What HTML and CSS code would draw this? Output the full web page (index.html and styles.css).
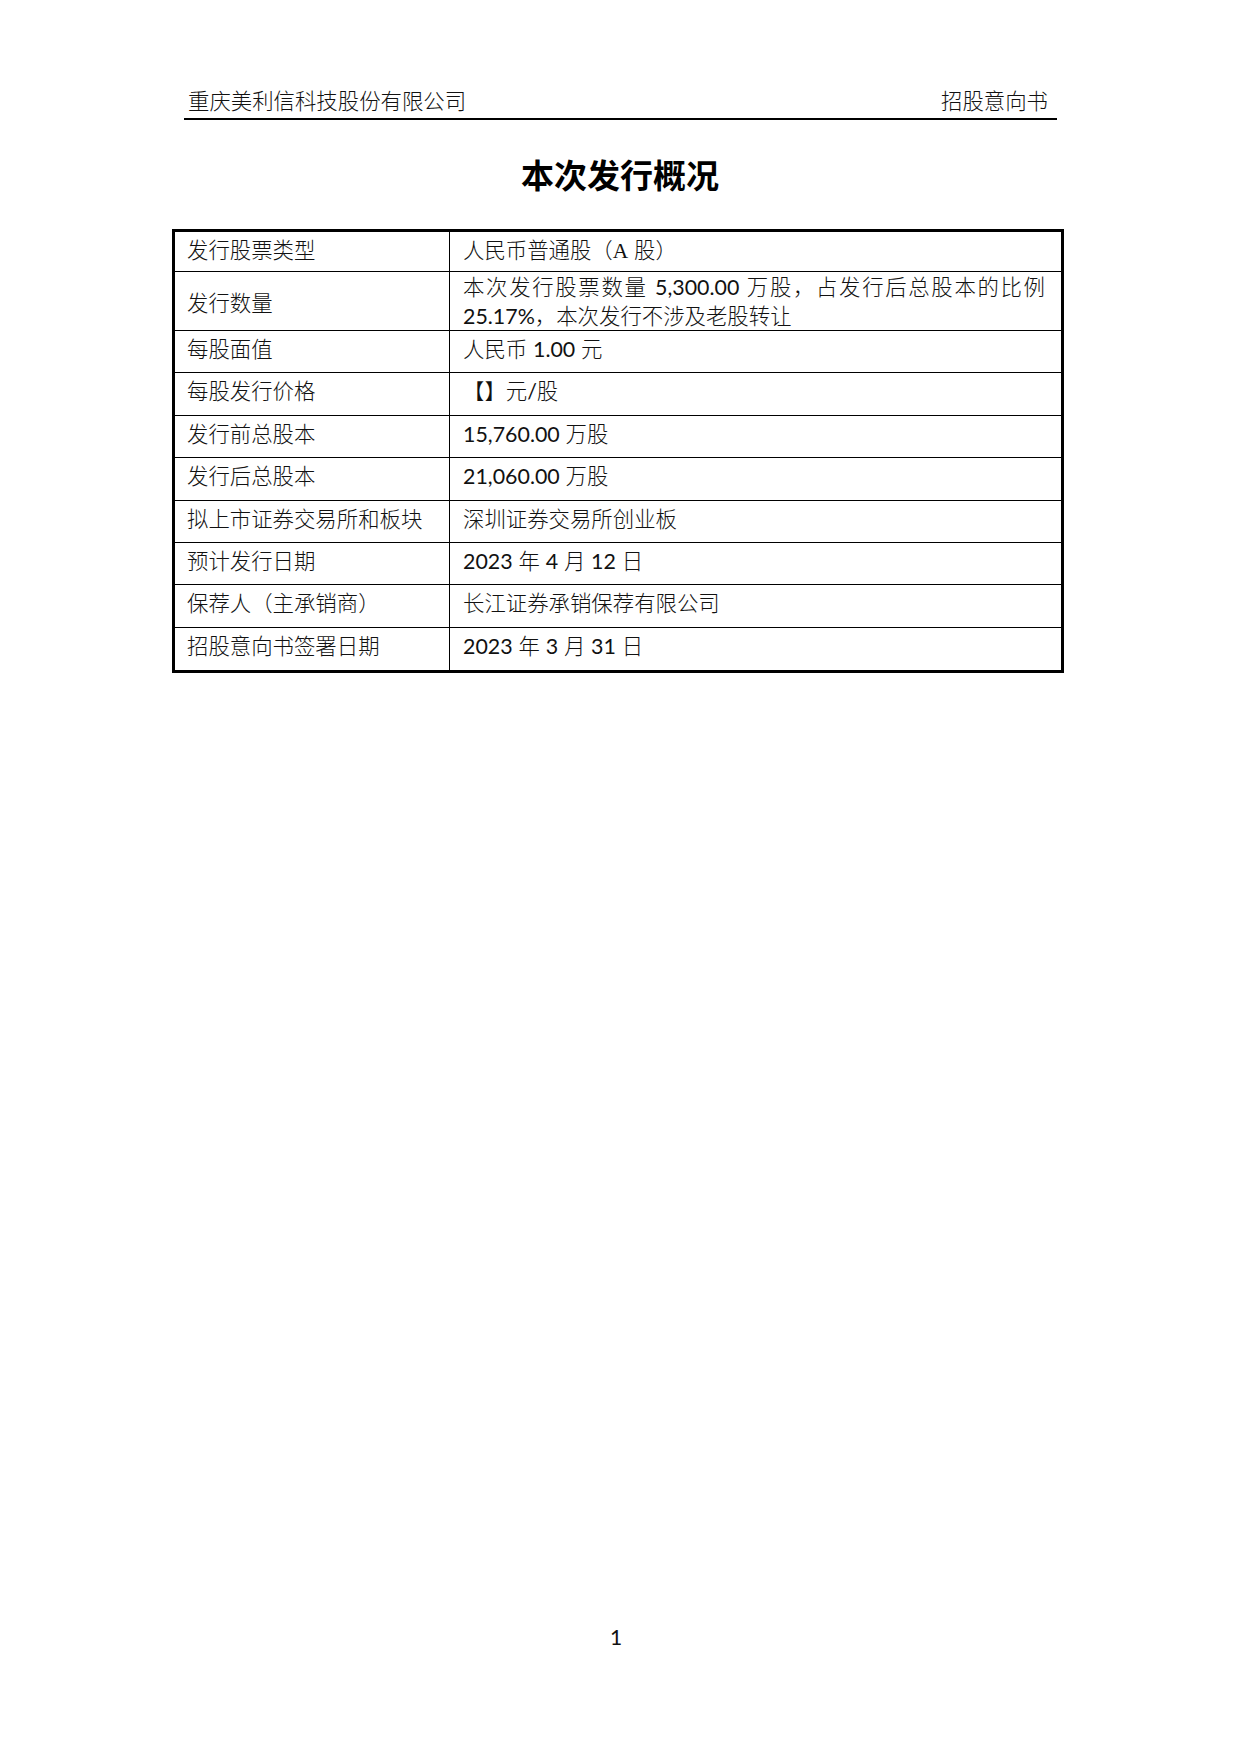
FILE: index.html
```html
<!DOCTYPE html>
<html lang="zh-CN">
<head>
<meta charset="utf-8">
<title>本次发行概况</title>
<link rel="stylesheet" href="styles.css">
</head>
<body>
<div class="page">
  <header class="running-head">
    <span>重庆美利信科技股份有限公司</span>
    <span>招股意向书</span>
  </header>
  <h1 class="title">本次发行概况</h1>
  <table class="summary">
    <colgroup><col class="c1"><col class="c2"></colgroup>
    <tr class="first"><th>发行股票类型</th><td>人民币普通股（<span class="latin">A</span> 股）</td></tr>
    <tr class="double"><th>发行数量</th><td><span class="jline">本次发行股票数量 <span class="num">5,300.00</span> 万股，占发行后总股本的比例</span><span class="num">25.17%</span>，本次发行不涉及老股转让</td></tr>
    <tr><th>每股面值</th><td>人民币 <span class="num">1.00</span> 元</td></tr>
    <tr><th>每股发行价格</th><td>【】元<span class="num">/</span>股</td></tr>
    <tr><th>发行前总股本</th><td><span class="num">15,760.00</span> 万股</td></tr>
    <tr><th>发行后总股本</th><td><span class="num">21,060.00</span> 万股</td></tr>
    <tr><th>拟上市证券交易所和板块</th><td>深圳证券交易所创业板</td></tr>
    <tr><th>预计发行日期</th><td><span class="num">2023</span> 年 <span class="num">4</span> 月 <span class="num">12</span> 日</td></tr>
    <tr><th>保荐人（主承销商）</th><td>长江证券承销保荐有限公司</td></tr>
    <tr><th>招股意向书签署日期</th><td><span class="num">2023</span> 年 <span class="num">3</span> 月 <span class="num">31</span> 日</td></tr>
  </table>
  <footer class="page-num">1</footer>
</div>
</body>
</html>
```

FILE: styles.css
```css
* { box-sizing: border-box; }

body {
  margin: 0;
  background: #fff;
  color: #111;
  font-family: "Lato", "Noto Sans CJK SC", sans-serif;
}

.page {
  width: 1240px;
  height: 1754px;
  display: flex;
  flex-direction: column;
  padding-bottom: 103px;
}

.running-head {
  display: flex;
  justify-content: space-between;
  margin: 87px 0 0 184px;
  width: 873px;
  padding: 0 9px 3px 4px;
  font-size: 21.4px;
  line-height: 28px;
  font-weight: 300;
  border-bottom: 2px solid #000;
}

.title {
  margin: 35px 0 0;
  text-align: center;
  font-size: 33px;
  line-height: 40px;
  font-weight: 700;
  color: #000;
}

.summary {
  margin: 34px 0 0 172px;
  width: 892px;
  table-layout: fixed;
  border-collapse: separate;
  border-spacing: 0;
  border: 3px solid #000;
  font-size: 21.4px;
  line-height: 28px;
}

.c1 { width: 275px; }
.c2 { width: 611px; }

.summary tr { height: 42.4px; }
.summary tr.first { height: 40px; }
.summary tr.double { height: auto; }

.summary th,
.summary td {
  padding: 4px 16px 0 13px;
  vertical-align: top;
  text-align: left;
  font-weight: 300;
  border-bottom: 1px solid #000;
}

.summary th {
  padding-left: 12px;
  border-right: 1px solid #000;
}

.summary tr:last-child th,
.summary tr:last-child td { border-bottom: 0; }

.summary tr.double th { vertical-align: middle; }
.summary tr.double td { line-height: 28.5px; padding-top: 1px; }

.jline {
  display: block;
  text-align: justify;
  text-align-last: justify;
}

.num { font-weight: 400; }

.latin { font-family: "Liberation Serif", serif; font-weight: 400; }

.page-num {
  margin-top: auto;
  padding-right: 8px;
  text-align: center;
  font-size: 21px;
  line-height: 28px;
}
```
